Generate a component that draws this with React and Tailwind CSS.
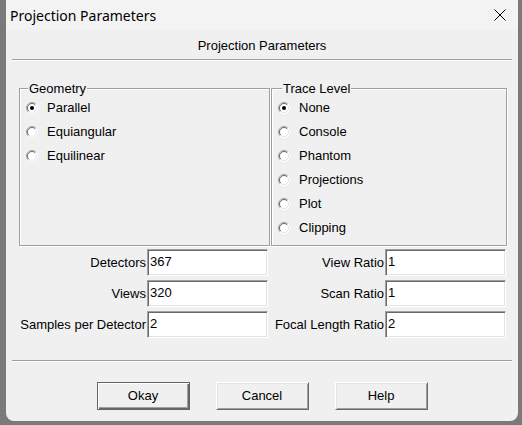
import { useState } from "react";

const font = { fontFamily: '"Liberation Sans", Arial, sans-serif' };

function Radio({ checked }) {
    return (
        <svg width="12" height="12" viewBox="0 0 12 12" className="shrink-0">
            <circle cx="6" cy="6" r="5.5" fill="#fff" />
            <path d="M9.9 2.1 A5.5 5.5 0 0 0 2.1 9.9" stroke="#a0a0a0" fill="none" />
            <path d="M9.2 2.8 A4.5 4.5 0 0 0 2.8 9.2" stroke="#696969" fill="none" />
            <path d="M9.9 2.1 A5.5 5.5 0 0 1 2.1 9.9" stroke="#fff" fill="none" />
            <path d="M9.2 2.8 A4.5 4.5 0 0 1 2.8 9.2" stroke="#e3e3e3" fill="none" />
            {checked && <circle cx="6" cy="6" r="2" fill="#000" />}
        </svg>
    );
}

function Group({ title, items, value, onChange, width, legendMl }) {
    return (
        <fieldset className={`${width} h-[165px] border border-[#a0a0a0] shadow-[inset_1px_1px_0_#fff,1px_1px_0_#fff]`}>
            <legend className={`${legendMl} px-[1px] leading-[15px] bg-[#f0f0f0]`}>{title}</legend>
            <div className="flex flex-col pl-[6px]">
                {items.map((it, i) => (
                    <div key={i} className="flex items-center h-[24px] gap-[9px] cursor-default" onClick={() => onChange(i)}>
                        <Radio checked={value === i} />
                        <span>{it}</span>
                    </div>
                ))}
            </div>
        </fieldset>
    );
}

function Field({ label, value, width }) {
    return (
        <div className={`flex items-center ${width}`}>
            <p className="flex-1 min-w-0 text-right pr-[1px] whitespace-nowrap">{label}</p>
            <input
                defaultValue={value}
                className="w-[121px] shrink-0 h-[27px] pl-[2px] pt-0 pb-[3px] bg-white outline-none border border-t-[#a0a0a0] border-l-[#a0a0a0] border-b-white border-r-white shadow-[inset_1px_1px_0_#696969,inset_-1px_-1px_0_#e3e3e3] text-[13px] text-black"
                style={font}
            />
        </div>
    );
}

function Btn({ children, isDefault }) {
    return (
        <button
            className={
                isDefault
                    ? "w-[93px] h-[28px] bg-[#f0f0f0] border border-[#646464] shadow-[inset_1px_1px_0_#fff,inset_-1px_-1px_0_#696969,inset_-2px_-2px_0_#a0a0a0]"
                    : "w-[93px] h-[28px] bg-[#f0f0f0] border border-t-white border-l-white border-b-[#696969] border-r-[#696969] shadow-[inset_1px_1px_0_#e3e3e3,inset_-1px_-1px_0_#a0a0a0]"
            }
        >
            {children}
        </button>
    );
}

const rows = [
    ["Detectors", "367", "View Ratio", "1"],
    ["Views", "320", "Scan Ratio", "1"],
    ["Samples per Detector", "2", "Focal Length Ratio", "2"],
];

function App() {
    const [geometry, setGeometry] = useState(0);
    const [trace, setTrace] = useState(0);
    return (
        <div className="w-[522px] h-[425px] bg-[#7a7a7a] overflow-hidden">
            <div className="ml-[6px] w-[512px] h-[421px] bg-[#f0f0f0] rounded-b-[8px] flex flex-col text-[13px] text-black" style={font}>
                <div className="h-[30px] bg-[#f3f3f3] flex items-center justify-between pl-[4px] pr-[12px]">
                    <span className="text-[14px]" style={{ fontFamily: '"Noto Sans", sans-serif' }}>Projection Parameters</span>
                    <svg width="12" height="12" viewBox="0 0 12 12">
                        <path d="M0.5 0.5 L11.5 11.5 M11.5 0.5 L0.5 11.5" stroke="#000" strokeWidth="1" />
                    </svg>
                </div>
                <p className="pt-[8px] leading-[15px] text-center">Projection Parameters</p>
                <div className="mx-[6px] mt-[6px] border-t border-t-[#a0a0a0] border-b border-b-white" />
                <div className="flex mt-[20px] ml-[13px] gap-[1px]">
                    <Group title="Geometry" items={["Parallel", "Equiangular", "Equilinear"]} value={geometry} onChange={setGeometry} width="w-[251px]" legendMl="ml-[8px]" />
                    <Group title="Trace Level" items={["None", "Console", "Phantom", "Projections", "Plot", "Clipping"]} value={trace} onChange={setTrace} width="w-[236px]" legendMl="ml-[10px]" />
                </div>
                <div className="flex flex-col gap-[4px] mt-[3px] ml-[12px]">
                    {rows.map((r, i) => (
                        <div key={i} className="flex gap-[3px]">
                            <Field label={r[0]} value={r[1]} width="w-[250px]" />
                            <Field label={r[2]} value={r[3]} width="w-[235px]" />
                        </div>
                    ))}
                </div>
                <div className="mx-[6px] mt-[22px] border-t border-t-[#a0a0a0] border-b border-b-white" />
                <div className="flex justify-center gap-[26px] mt-[20px]">
                    <Btn isDefault>Okay</Btn>
                    <Btn>Cancel</Btn>
                    <Btn>Help</Btn>
                </div>
            </div>
        </div>
    );
}

export default App;
